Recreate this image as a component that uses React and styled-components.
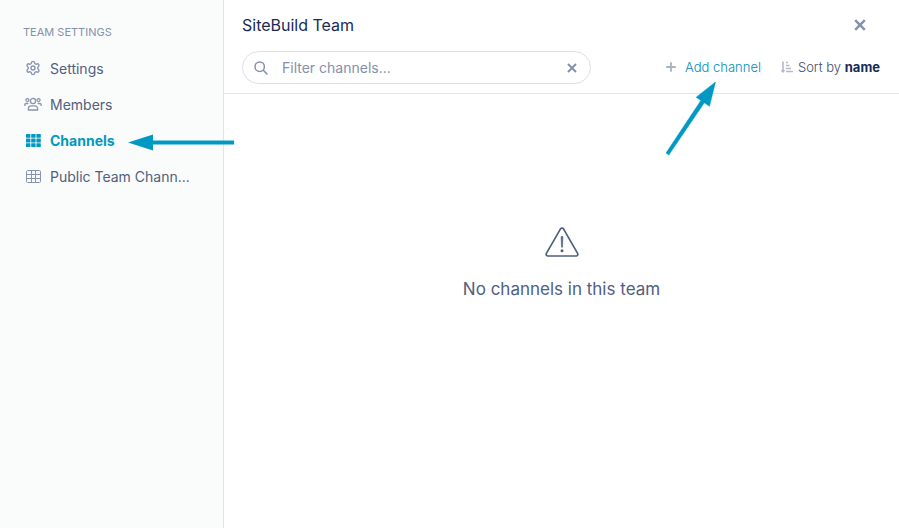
import React, { useState } from 'react'
import styled, { createGlobalStyle } from 'styled-components'
import { Settings } from 'lucide-react'

const navItems = [
    { id: 'settings', label: 'Settings', icon: GearIcon },
    { id: 'members', label: 'Members', icon: MembersIcon },
    { id: 'channels', label: 'Channels', icon: GridIcon },
    { id: 'public', label: 'Public Team Chann...', icon: TableIcon },
]

const App = () => {

    const [active, setActive] = useState('channels')
    const [filter, setFilter] = useState('')

    return (
        <>
            <GlobalStyle />
            <Layout>
                <Sidebar>
                    <SidebarTit>TEAM SETTINGS</SidebarTit>
                    <nav>
                        {navItems.map(({ id, label, icon: Icon }) => (
                            <NavItem key={id}>
                                <NavButton $active={id === active} onClick={() => setActive(id)}>
                                    <NavIcon $active={id === active}><Icon /></NavIcon>
                                    {label}
                                </NavButton>
                                {id === 'channels' && <ChannelsArrow />}
                            </NavItem>
                        ))}
                    </nav>
                </Sidebar>
                <Main>
                    <Header>
                        <TitleRow>
                            <Title>SiteBuild Team</Title>
                            <CloseButton aria-label="Close">
                                <CrossIcon size={12} />
                            </CloseButton>
                        </TitleRow>
                        <Toolbar>
                            <SearchBox>
                                <SearchIcon />
                                <SearchInput
                                    type="text"
                                    aria-label="Filter channels"
                                    placeholder="Filter channels..."
                                    value={filter}
                                    onChange={(e) => setFilter(e.target.value)}
                                />
                                <ClearButton aria-label="Clear filter" onClick={() => setFilter('')}>
                                    <CrossIcon size={10} />
                                </ClearButton>
                            </SearchBox>
                            <Actions>
                                <AddButton>
                                    <PlusIcon />
                                    Add channel
                                    <AddArrow />
                                </AddButton>
                                <SortButton>
                                    <SortIcon />
                                    <span>Sort by <b>name</b></span>
                                </SortButton>
                            </Actions>
                        </Toolbar>
                    </Header>
                    <Empty>
                        <WarningIcon />
                        <EmptyText>No channels in this team</EmptyText>
                    </Empty>
                </Main>
            </Layout>
        </>
    )
}

/* icons */
function GearIcon() {
    return <Settings size={16} strokeWidth={2.1} />
}

function MembersIcon() {
    return (
        <svg width="18" height="14" viewBox="0 0 18 14" fill="none" stroke="currentColor" strokeWidth="1.3" strokeLinecap="round">
            <circle cx="9" cy="4" r="2.6" />
            <circle cx="3.4" cy="3.1" r="1.5" />
            <circle cx="14.6" cy="3.1" r="1.5" />
            <path d="M4.4 13v-1.4a2.8 2.8 0 0 1 2.8-2.8h3.6a2.8 2.8 0 0 1 2.8 2.8V13z" strokeLinejoin="round" />
            <path d="M.8 8.4V8c0-.9.7-1.5 1.5-1.5h1.6M17.2 8.4V8c0-.9-.7-1.5-1.5-1.5h-1.6" />
        </svg>
    )
}

function GridIcon() {
    return (
        <svg width="15" height="13" viewBox="0 0 15 13" fill="currentColor">
            {[0, 4.6, 9.2].map((y) => [0, 5.2, 10.4].map((x) => (
                <rect key={`${x}-${y}`} x={x} y={y} width="4.4" height="3.8" rx=".5" />
            )))}
        </svg>
    )
}

function TableIcon() {
    return (
        <svg width="15" height="13" viewBox="0 0 15 13" fill="none" stroke="currentColor">
            <rect x=".5" y=".5" width="14" height="12" rx="1.2" />
            <path d="M.5 4.5h14M.5 8.5h14M5.5.5v12M9.5.5v12" />
        </svg>
    )
}

function CrossIcon({ size }) {
    return (
        <svg width={size} height={size} viewBox="0 0 12 12" fill="none" stroke="currentColor" strokeWidth="2.4">
            <path d="M1.2 1.2l9.6 9.6M10.8 1.2l-9.6 9.6" />
        </svg>
    )
}

function SearchIcon() {
    return (
        <svg width="14" height="14" viewBox="0 0 14 14" fill="none" stroke="currentColor" strokeWidth="1.5" strokeLinecap="round">
            <circle cx="5.7" cy="5.7" r="4.7" />
            <path d="M9.3 9.3l3.6 3.6" />
        </svg>
    )
}

function PlusIcon() {
    return (
        <svg width="10" height="10" viewBox="0 0 10 10" fill="none" stroke="#a9b1c2" strokeWidth="1.8">
            <path d="M5 .2v9.6M.2 5h9.6" />
        </svg>
    )
}

function SortIcon() {
    return (
        <svg width="12" height="12" viewBox="0 0 12 12" fill="none" stroke="#b3bac9" strokeWidth="1.6">
            <path d="M2 .5v10M.4 9.2L2 10.8l1.6-1.6" />
            <path d="M5 1.5h2M5 4.5h3.5M5 7.5h5M5 10.5h7" />
        </svg>
    )
}

function WarningIcon() {
    return (
        <svg width="34" height="30" viewBox="0 0 34 30" fill="none" stroke="currentColor" strokeWidth="1.7">
            <path d="M15.5 1.9a1.8 1.8 0 0 1 3 0L32.6 26.4a1.7 1.7 0 0 1-1.5 2.6H2.9a1.7 1.7 0 0 1-1.5-2.6z" />
            <path d="M16.1 9.6h1.8l-.4 10.6h-1z" fill="currentColor" strokeWidth=".6" />
            <circle cx="17" cy="23.8" r="1.5" fill="currentColor" stroke="none" />
        </svg>
    )
}

/* pointers laid over the page */
const ChannelsArrow = () => (
    <LeftArrow width="107" height="17" viewBox="0 0 107 17" aria-hidden="true">
        <path d="M0 8.5L25 .5v6h81v4H25v6z" fill="#0099c4" />
    </LeftArrow>
)

const AddArrow = () => (
    <UpArrow width="50" height="74" viewBox="0 0 50 74" aria-hidden="true">
        <path d="M49.5 0L43.5 24.3L38.3 20.8L2.8 73L0 71L34.9 18.4L30.2 15.2z" fill="#0099c4" stroke="#0099c4" strokeWidth=".5" />
    </UpArrow>
)

const GlobalStyle = createGlobalStyle`
    *{
        box-sizing:border-box;
    }
    body{
        margin:0;
        background-color:#fff;
        font-family:Inter, "Liberation Sans", sans-serif;
        font-size:14px;
        color:#50607f;
    }
    svg{
        display:block;
        flex:none;
    }
    button{
        display:flex;
        align-items:center;
        padding:0;
        border:none;
        background:none;
        font:inherit;
        color:inherit;
        cursor:pointer;
    }
`

const Layout = styled.div`
    display:flex;
    min-height:100vh;
`

const Sidebar = styled.aside`
    flex:0 0 224px;
    min-width:0;
    padding:24px 23px;
    background-color:#fafcfc;
    border-right:1px solid #e2e4e8;
`

const SidebarTit = styled.h2`
    margin:0 0 9px;
    font-size:11px;
    font-weight:400;
    line-height:17px;
    color:#8590aa;
`

const NavItem = styled.div`
    position:relative;
`

const NavButton = styled.button`
    width:100%;
    height:36px;
    gap:7px;
    text-align:left;
    white-space:nowrap;
    color:${props => props.$active ? '#0099bf' : '#50607f'};
    font-weight:${props => props.$active ? 700 : 400};
`

const NavIcon = styled.span`
    flex:0 0 20px;
    display:flex;
    justify-content:center;
    color:${props => props.$active ? '#0099bf' : '#8b93b0'};
`

const LeftArrow = styled.svg`
    position:absolute;
    left:105px;
    top:12px;
    z-index:2;
    pointer-events:none;
`

const Main = styled.main`
    flex:1;
    min-width:0;
`

const Header = styled.header`
    padding:0 19px 9px 18px;
    border-bottom:1px solid #e2e4e8;
`

const TitleRow = styled.div`
    display:flex;
    align-items:center;
    justify-content:space-between;
    height:51px;
    padding-bottom:2px;
`

const Title = styled.h1`
    margin:0;
    font-size:16px;
    font-weight:400;
    line-height:20px;
    color:#172b56;
`

const CloseButton = styled.button`
    justify-content:center;
    width:40px;
    height:32px;
    color:#8590aa;
`

const Toolbar = styled.div`
    display:flex;
    align-items:center;
    justify-content:space-between;
    gap:20px;
`

const SearchBox = styled.div`
    flex:0 1 349px;
    display:flex;
    align-items:center;
    height:33px;
    min-width:0;
    padding:0 12px 0 11px;
    border:1px solid #dcdfe6;
    border-radius:17px;
    color:#8590aa;
`

const SearchInput = styled.input`
    flex:1;
    min-width:0;
    padding:0 0 0 14px;
    border:none;
    outline:none;
    background:none;
    font:inherit;
    color:#50607f;
    &::placeholder{
        color:#8590aa;
        opacity:1;
    }
`

const ClearButton = styled.button`
    justify-content:center;
    width:12px;
    height:24px;
`

const Actions = styled.div`
    display:flex;
    align-items:center;
    gap:20px;
    padding-bottom:2px;
    font-size:13px;
    font-weight:300;
    white-space:nowrap;
    color:#3c4c6e;
`

const AddButton = styled.button`
    position:relative;
    gap:9px;
    color:#008fb8;
`

const SortButton = styled.button`
    gap:5px;
    b{
        font-weight:700;
        color:#172b56;
    }
`

const UpArrow = styled.svg`
    position:absolute;
    left:0;
    top:23px;
    pointer-events:none;
`

const Empty = styled.section`
    display:flex;
    flex-direction:column;
    align-items:center;
    gap:20px;
    padding:133px 20px 0;
`

const EmptyText = styled.p`
    margin:0;
    font-size:17px;
    line-height:24px;
`

export default App;
